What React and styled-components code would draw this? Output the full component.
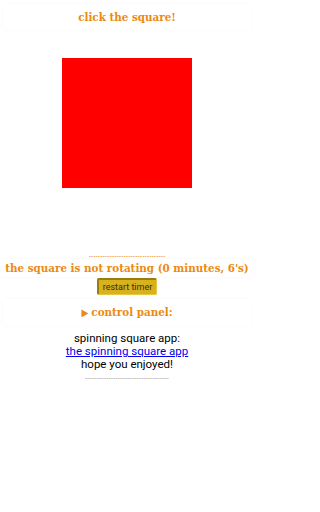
import React from "react";
import styled, { createGlobalStyle } from "styled-components";

const Global = createGlobalStyle`
  html, body { margin: 0; padding: 0; background: #ffffff; }
  body { font-family: Roboto, "Liberation Sans", sans-serif; }
`;

const Page = styled.div`
  width: 254px;
  display: flex;
  flex-direction: column;
  align-items: center;
`;

const Heading = styled.div`
  box-sizing: border-box;
  width: ${(p) => p.$w || "248px"};
  margin-top: ${(p) => p.$mt || "0px"};
  padding: ${(p) => p.$pad || "6px 0"};
  text-align: center;
  font-family: "DejaVu Serif", "Liberation Serif", serif;
  font-stretch: condensed;
  font-weight: bold;
  font-size: 11.5px;
  line-height: 14px;
  color: #ec8a10;
  background: #ffffff;
  border-radius: 4px;
  box-shadow: 0 0 3px rgba(0, 0, 0, 0.04);
  white-space: nowrap;
`;

const Square = styled.div`
  width: 130px;
  height: 130px;
  margin-top: 28px;
  background: #ff0000;
  cursor: pointer;
`;

const Dashes = styled.div`
  margin-top: ${(p) => p.$mt || "0px"};
  font-family: "Liberation Sans", sans-serif;
  font-size: 7px;
  line-height: 6px;
  height: 6px;
  overflow: hidden;
  color: ${(p) => p.$color};
`;

const Button = styled.button`
  margin-top: 1px;
  height: 17px;
  padding: 0 4px;
  font-family: Roboto, "Liberation Sans", sans-serif;
  font-size: 9px;
  color: #3a3000;
  background: #d8b21e;
  border-style: solid;
  border-width: 2px 1px 1px 2px;
  border-color: #9b7d0e #e8c640 #e8c640 #9b7d0e;
  border-radius: 2px;
`;

const Arrow = styled.span`
  font-family: "DejaVu Sans", sans-serif;
  font-size: 10px;
  margin-right: 3px;
`;

const Info = styled.div`
  margin-top: 6px;
  text-align: center;
  font-family: Roboto, "Liberation Sans", sans-serif;
  font-size: 11.5px;
  line-height: 13px;
  color: #000000;
`;

const Link = styled.a`
  color: #0000ee;
  text-decoration: underline;
`;

export default function App() {
  return (
    <>
      <Global />
      <Page>
        <Heading $mt="4px">click the square!</Heading>
        <Square />
        <Dashes $mt="65px" $color="#ec8a10">---------------------------------</Dashes>
        <Heading $pad="2px 0" $w="254px">the square is not rotating (0 minutes, 6's)</Heading>
        <Button>restart timer</Button>
        <Heading $mt="4px" $pad="6px 0">
          <Arrow>▶</Arrow>control panel:
        </Heading>
        <Info>
          spinning square app:
          <br />
          <Link href="#">the spinning square app</Link>
          <br />
          hope you enjoyed!
        </Info>
        <Dashes $mt="4px" $color="#999999">------------------------------------</Dashes>
      </Page>
    </>
  );
}
